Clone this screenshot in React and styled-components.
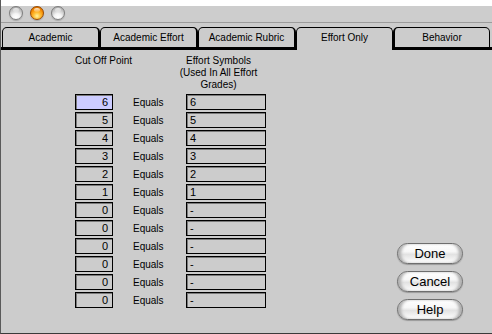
import React from "react";
import styled, { createGlobalStyle } from "styled-components";

const GlobalStyle = createGlobalStyle`
  html, body {
    margin: 0;
    padding: 0;
    background: #cccccc;
  }
  body {
    font-family: "Liberation Sans", Arial, sans-serif;
    color: #000;
  }
`;

const Window = styled.div`
  width: 492px;
  height: 334px;
  box-sizing: border-box;
  background: #cccccc;
  border-left: 1px solid #5a5a5a;
  border-bottom: 1px solid #3a3a3a;
  display: flex;
  flex-direction: column;
  overflow: hidden;
`;

const TopStrip = styled.div`
  height: 6px;
  background: #ffffff;
  flex-shrink: 0;
`;

const TitleBar = styled.div`
  height: 16px;
  flex-shrink: 0;
  display: flex;
  gap: 7px;
  padding-left: 8px;
  border-bottom: 1px solid #9c9c9c;
  background: #cdcdcd;
`;

const Light = styled.div`
  position: relative;
  width: 14px;
  height: 14px;
  border-radius: 50%;
  box-sizing: border-box;
  border: 1px solid ${(p) => (p.$active ? "#9a4a00" : "#7e7e7e")};
  background: ${(p) =>
    p.$active
      ? "radial-gradient(circle at 50% 75%, #fff3a0 0%, #ffc23a 30%, #f58a00 65%, #c45c00 100%)"
      : "radial-gradient(circle at 50% 85%, #ffffff 0%, #f4f4f4 30%, #c4c4c4 65%, #9c9c9c 100%)"};
  box-shadow: 0 1px 1px rgba(0, 0, 0, 0.2);

  &::after {
    content: "";
    position: absolute;
    left: 3px;
    top: 1px;
    width: 6px;
    height: 4px;
    border-radius: 50%;
    background: linear-gradient(
      rgba(255, 255, 255, ${(p) => (p.$active ? 0.85 : 0.7)}),
      rgba(255, 255, 255, 0.1)
    );
  }
`;

const TabBar = styled.div`
  display: flex;
  height: 23px;
  margin-top: 4px;
  flex-shrink: 0;
`;

const TabFiller = styled.div`
  box-sizing: border-box;
  width: ${(p) => (p.$grow ? "auto" : "1px")};
  flex: ${(p) => (p.$grow ? 1 : "none")};
  border-bottom: 3px solid #000;
`;

const Tab = styled.div`
  box-sizing: border-box;
  width: ${(p) => p.$width}px;
  height: 23px;
  display: flex;
  align-items: ${(p) => (p.$selected ? "flex-start" : "center")};
  justify-content: center;
  padding-top: ${(p) => (p.$selected ? "4px" : "0")};
  font-size: 10px;
  border-top: 1px solid #000;
  border-left: ${(p) => (p.$side === "right" ? 2 : 1)}px solid #000;
  border-right: ${(p) => (p.$side === "left" ? 2 : 1)}px solid #000;
  border-bottom: ${(p) => (p.$selected ? "none" : "3px solid #000")};
  border-radius: 5px 5px 0 0;
  background: #cccccc;
`;

const Content = styled.div`
  flex: 1;
  display: flex;
  padding-left: 74px;
`;

const Sheet = styled.div`
  display: flex;
  flex-direction: column;
`;

const Headers = styled.div`
  display: flex;
  padding-top: 5px;
  font-size: 10px;
  line-height: 12px;
`;

const HeaderCell = styled.div`
  width: ${(p) => p.$width}px;
  margin-left: ${(p) => p.$offset || 0}px;
  text-align: center;
  white-space: nowrap;
`;

const Rows = styled.div`
  display: flex;
  flex-direction: column;
  gap: 2px;
  margin-top: 3px;
`;

const Row = styled.div`
  display: flex;
  align-items: center;
  height: 16px;
`;

const Field = styled.div`
  box-sizing: border-box;
  width: ${(p) => p.$width}px;
  height: 16px;
  border: 1px solid #000;
  box-shadow: inset 1px 1px 0 #7a7a7a;
  background: ${(p) => (p.$focus ? "#ccccff" : "#cccccc")};
  font-size: 11px;
  line-height: 15px;
  text-align: ${(p) => (p.$right ? "right" : "left")};
  padding: ${(p) => (p.$right ? "0 4px 0 0" : "0 0 0 3px")};
`;

const Label = styled.div`
  width: 73px;
  box-sizing: border-box;
  padding-left: 20px;
  font-size: 10px;
`;

const Buttons = styled.div`
  margin-left: auto;
  margin-right: 29px;
  margin-bottom: 13px;
  align-self: flex-end;
  display: flex;
  flex-direction: column;
  gap: 7px;
`;

const Button = styled.button`
  width: 66px;
  height: 21px;
  box-sizing: border-box;
  border: 1px solid #6e6e6e;
  border-radius: 11px;
  padding: 0;
  font-family: "Liberation Sans", Arial, sans-serif;
  font-size: 13px;
  color: #000;
  background: linear-gradient(
    #ffffff 0%,
    #f7f7f7 40%,
    #e2e2e2 55%,
    #f2f2f2 80%,
    #ffffff 100%
  );
  box-shadow: inset 4px 0 3px -1px #b0b0b0, inset -4px 0 3px -1px #b0b0b0,
    0 1px 1px rgba(0, 0, 0, 0.25);
`;

const tabs = [
  { name: "Academic", width: 98, side: "left" },
  { name: "Academic Effort", width: 98, side: "left" },
  { name: "Academic Rubric", width: 98, side: "left" },
  { name: "Effort Only", width: 97, selected: true },
  { name: "Behavior", width: 97, side: "right" },
];

const rows = [
  ["6", "6"],
  ["5", "5"],
  ["4", "4"],
  ["3", "3"],
  ["2", "2"],
  ["1", "1"],
  ["0", "-"],
  ["0", "-"],
  ["0", "-"],
  ["0", "-"],
  ["0", "-"],
  ["0", "-"],
];

export default function App() {
  return (
    <>
      <GlobalStyle />
      <Window>
        <TopStrip />
        <TitleBar>
          <Light />
          <Light $active />
          <Light />
        </TitleBar>
        <TabBar>
          <TabFiller />
          {tabs.map((t) => (
            <Tab
              key={t.name}
              $width={t.width}
              $side={t.side}
              $selected={t.selected}
            >
              {t.name}
            </Tab>
          ))}
          <TabFiller $grow />
        </TabBar>
        <Content>
          <Sheet>
            <Headers>
              <HeaderCell $width={42}>Cut Off Point</HeaderCell>
              <HeaderCell $width={95} $offset={54}>
                Effort Symbols
                <br />
                (Used In All Effort
                <br />
                Grades)
              </HeaderCell>
            </Headers>
            <Rows>
              {rows.map(([cut, sym], i) => (
                <Row key={i}>
                  <Field $width={38} $right $focus={i === 0}>
                    {cut}
                  </Field>
                  <Label>Equals</Label>
                  <Field $width={80}>{sym}</Field>
                </Row>
              ))}
            </Rows>
          </Sheet>
          <Buttons>
            <Button>Done</Button>
            <Button>Cancel</Button>
            <Button>Help</Button>
          </Buttons>
        </Content>
      </Window>
    </>
  );
}
